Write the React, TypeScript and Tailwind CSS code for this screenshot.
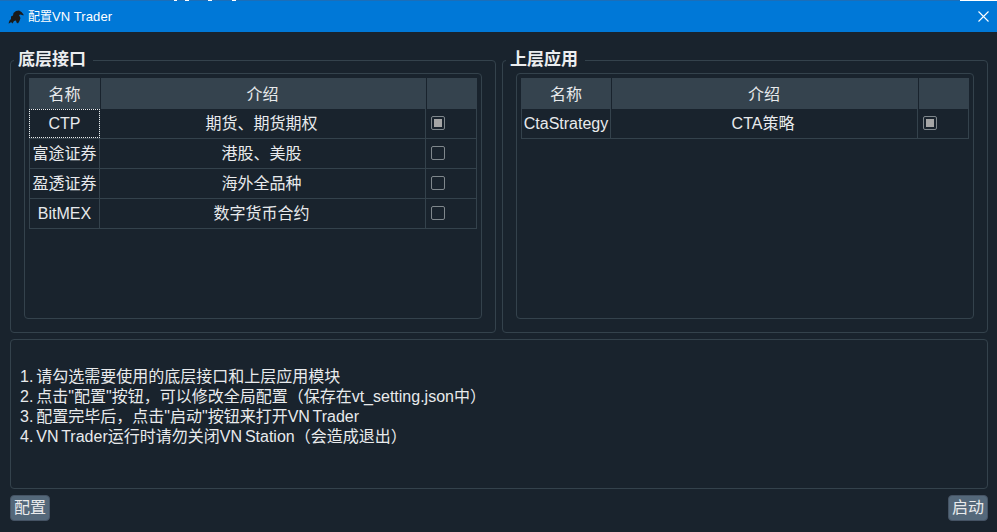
const FONT = "font-['Liberation_Sans','Noto_Sans_CJK_SC',sans-serif]";

function Check({ on }: { on?: boolean }) {
  return (
    <span className="flex h-[14px] w-[14px] items-center justify-center rounded-[2px] border border-[#7f878c]">
      {on && <span className="h-[8px] w-[8px] bg-[#a6a6a6]" />}
    </span>
  );
}

function Table({
  rows,
  c1,
  focus,
}: {
  rows: { name: string; desc: string; on?: boolean }[];
  c1: string;
  focus?: boolean;
}) {
  return (
    <div className="flex flex-col">
      <div className="flex h-[31px] gap-px text-[16px] leading-[33px] text-[#e8eaec]">
        <div className={`${c1} bg-[#35434e] text-center`}>名称</div>
        <div className="flex-1 bg-[#35434e] pr-[2px] text-center">介绍</div>
        <div className="w-[50px] bg-[#35434e]" />
      </div>
      {rows.map((r, i) => (
        <div key={r.name} className="flex h-[30px] border-b border-[#34424c] text-[16px] leading-[29px] text-[#e8eaec]">
          <div className={`${c1} border-x border-[#34424c] text-center ${focus && i === 0 ? "outline-1 -outline-offset-1 outline-dotted outline-[#e8eaec]" : ""}`}>{r.name}</div>
          <div className="flex-1 pr-[2px] text-center">{r.desc}</div>
          <div className="w-[52px] border-x border-[#34424c] pl-[5px] pt-[7px]">
            <Check on={r.on} />
          </div>
        </div>
      ))}
    </div>
  );
}

function Group({ title, children }: { title: string; children: React.ReactNode }) {
  return (
    <div className="relative w-[486px] rounded-[4px] border border-[#34424c] px-[13px] pb-[13px] pt-[12px]">
      <span className="absolute -top-[13px] left-[3px] bg-[#19232d] pl-[4px] pr-[7px] text-[17px] font-bold leading-[24px] text-[#eceef0]">
        {title}
      </span>
      <div className="h-full rounded-[4px] border border-[#34424c] p-[4px]">{children}</div>
    </div>
  );
}

export default function App() {
  return (
    <div className={`${FONT} flex h-[532px] w-[997px] flex-col overflow-hidden bg-[#19232d]`}>
      <div className="flex h-px bg-[#1c6eb8]">
        <div className="ml-[174px] w-[3px] bg-white" />
        <div className="ml-[8px] w-[4px] bg-white" />
        <div className="ml-[19px] w-[4px] bg-white" />
        <div className="ml-[20px] w-[4px] bg-white" />
        <div className="ml-auto w-[37px] bg-white" />
      </div>
      <div className="flex h-[31px] items-center bg-[#0078d7] pl-[8px] pr-[8px] text-[13px] text-white">
        <svg width="16" height="14" viewBox="0 0 16 14" className="mr-[4px]">
          <path d="M0.5 13.5 L1.5 10.5 L3 9 L3 6.5 L5 5.5 L5.5 3 L8 1 L11 0.5 L13.5 2 L15.5 4.5 L15.5 5.5 L12.5 4.5 L11 5 L12.5 8 L11.5 11 L10 13.5 L8.5 12.5 L8 10.5 L6 11 L4.5 13.5 L3 12 L2 13 Z" fill="#1a1a1a" />
        </svg>
        <span className="text-[12px]">配置</span>
        <span className="tracking-[0.1px]">VN Trader</span>
        <svg width="11" height="11" viewBox="0 0 11 11" className="ml-auto" stroke="white" strokeWidth="1.1">
          <path d="M0.5 0.5 L10.5 10.5 M10.5 0.5 L0.5 10.5" />
        </svg>
      </div>
      <div className="flex flex-1 flex-col pl-[10px] pr-[9px]">
        <div className="mt-[28px] flex h-[273px] gap-[6px]">
          <Group title="底层接口">
            <Table
              c1="w-[71px]"
              focus
              rows={[
                { name: "CTP", desc: "期货、期货期权", on: true },
                { name: "富途证券", desc: "港股、美股" },
                { name: "盈透证券", desc: "海外全品种" },
                { name: "BitMEX", desc: "数字货币合约" },
              ]}
            />
          </Group>
          <Group title="上层应用">
            <Table c1="w-[90px]" rows={[{ name: "CtaStrategy", desc: "CTA策略", on: true }]} />
          </Group>
        </div>
        <div className="mt-[6px] h-[150px] rounded-[4px] border border-[#34424c] pl-[9px] pt-[27px] text-[16px] leading-[20px] text-[#e8eaec] [word-spacing:-1.5px]">
          <p>1. 请勾选需要使用的底层接口和上层应用模块</p>
          <p>2. 点击"配置"按钮，可以修改全局配置（保存在vt_setting.json中）</p>
          <p>3. 配置完毕后，点击"启动"按钮来打开VN Trader</p>
          <p>4. VN Trader运行时请勿关闭VN Station（会造成退出）</p>
        </div>
        <div className="mt-[6px] flex justify-between">
          <button className="h-[26px] w-[40px] rounded-[4px] border border-[#455364] bg-[#54687a] text-[16px] leading-[24px] text-[#e8eaec]">配置</button>
          <button className="h-[26px] w-[40px] rounded-[4px] border border-[#455364] bg-[#54687a] text-[16px] leading-[24px] text-[#e8eaec]">启动</button>
        </div>
      </div>
    </div>
  );
}
